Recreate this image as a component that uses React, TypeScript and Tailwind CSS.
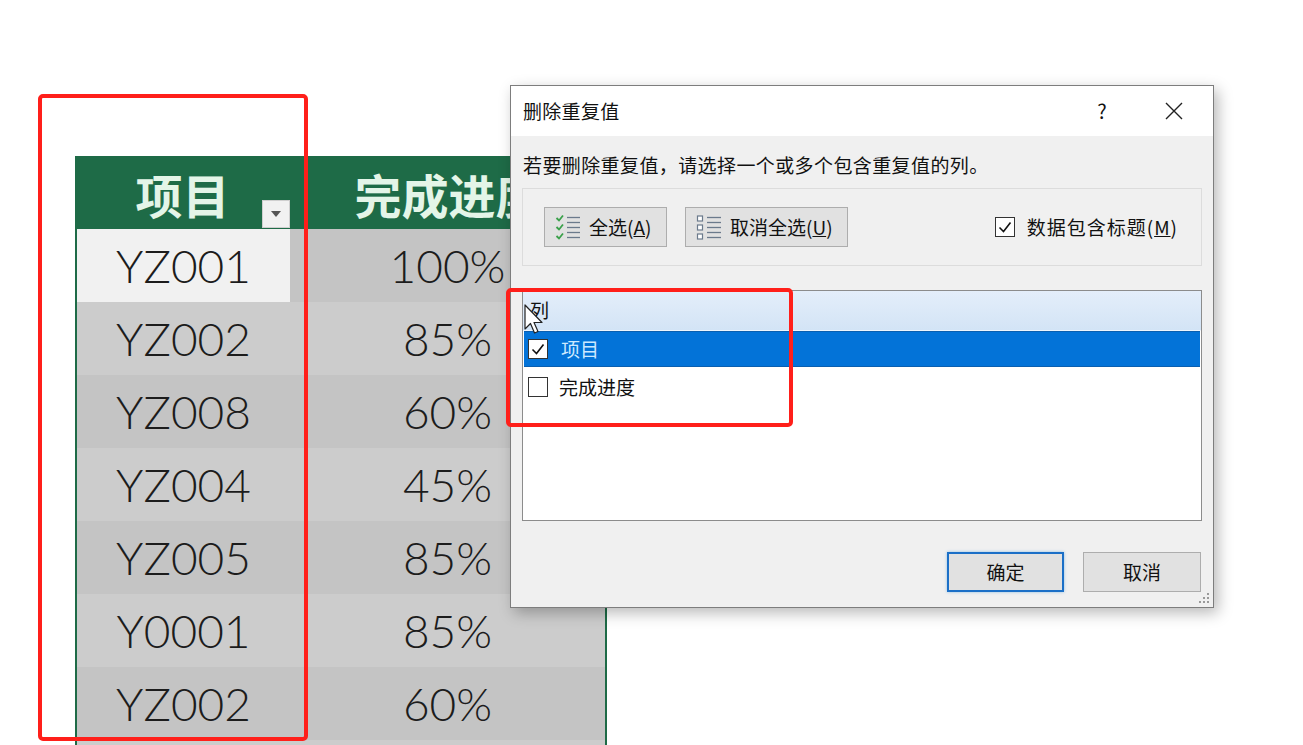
import React from "react";

const rows = [
  { id: "YZ001", pct: "100%" },
  { id: "YZ002", pct: "85%" },
  { id: "YZ008", pct: "60%" },
  { id: "YZ004", pct: "45%" },
  { id: "YZ005", pct: "85%" },
  { id: "Y0001", pct: "85%" },
  { id: "YZ002", pct: "60%" },
  { id: "", pct: "" },
];

const cjk = { fontFamily: '"Noto Sans CJK SC", "Noto Sans", sans-serif' };

function CheckBox({ checked }: { checked?: boolean }) {
  return (
    <span className="inline-flex w-[20px] h-[20px] shrink-0 items-center justify-center border-[1.5px] border-[#333] bg-white">
      {checked && (
        <svg width="16" height="16" viewBox="0 0 16 16">
          <path d="M2.5 8.5 L6.5 12.5 L13.5 3.5" stroke="#111" strokeWidth="1.6" fill="none" />
        </svg>
      )}
    </span>
  );
}

function SelectAllIcon() {
  return (
    <svg width="26" height="27" viewBox="0 0 26 27">
      {[4, 13, 22].map((y) => (
        <path key={y} d={`M1.5 ${y} l2.5 2.5 l4 -5`} stroke="#3aa04a" strokeWidth="1.8" fill="none" />
      ))}
      {[3, 8, 13, 18, 23].map((y) => (
        <path key={y} d={`M12 ${y + 0.5} h13`} stroke="#6b7a8c" strokeWidth="1.3" />
      ))}
    </svg>
  );
}

function UnselectAllIcon() {
  return (
    <svg width="26" height="27" viewBox="0 0 26 27">
      {[2, 11, 20].map((y) => (
        <rect key={y} x="1.5" y={y} width="5" height="5" stroke="#6b7a8c" strokeWidth="1.2" fill="white" />
      ))}
      {[3, 8, 13, 18, 23].map((y) => (
        <path key={y} d={`M11 ${y + 0.5} h14`} stroke="#6b7a8c" strokeWidth="1.3" />
      ))}
    </svg>
  );
}

function Sheet() {
  return (
    <div className="pt-[156px] pl-[75px]">
      <div className="w-[532px]">
        <div className="flex h-[73px] bg-[#1e6b47] text-[#e4f5e8] font-bold text-[47px]" style={cjk}>
          <div className="relative w-[215px] flex items-center justify-center pt-[4px]">
            项目
            <div className="absolute right-0 bottom-[1px] w-[28px] h-[28px] bg-[#f1f1f1] border border-[#cfcfcf] flex items-center justify-center">
              <svg width="10" height="6" viewBox="0 0 10 6">
                <path d="M0 0 H10 L5 6 Z" fill="#555" />
              </svg>
            </div>
          </div>
          <div className="flex-1 flex items-center justify-center pt-[4px] whitespace-nowrap">完成进度</div>
        </div>
        <div className="border-x-2 border-[#1e6b47] text-[46px] font-light text-[#1c1c1c]" style={{ fontFamily: "Lato, 'Open Sans', sans-serif" }}>
          {rows.map((r, i) => (
            <div key={i} className={`flex h-[73px] ${i % 2 === 0 ? "bg-[#c4c4c4]" : "bg-[#cccccc]"}`}>
              <div className={`w-[213px] flex items-center justify-center ${i === 0 ? "bg-[#f1f1f1]" : ""}`}>{r.id}</div>
              <div className="flex-1 flex items-center justify-center">{r.pct}</div>
            </div>
          ))}
        </div>
      </div>
    </div>
  );
}

function Dialog() {
  return (
    <div
      className="absolute left-[510px] top-[85px] w-[704px] h-[523px] border border-[#7d7d7d] bg-[#f0f0f0] flex flex-col shadow-[4px_5px_14px_rgba(0,0,0,0.28)] text-[19px] text-[#111]"
      style={cjk}
    >
      <div className="h-[50px] bg-white flex items-center pl-[12px] pr-[16px]">
        <span className="flex-1 tracking-[0.3px]">删除重复值</span>
        <span className="w-[46px] text-center text-[20px]">?</span>
        <span className="w-[46px] ml-[26px] flex justify-center">
          <svg width="18" height="18" viewBox="0 0 18 18">
            <path d="M1 1 L17 17 M17 1 L1 17" stroke="#222" strokeWidth="1.4" />
          </svg>
        </span>
      </div>
      <div className="flex-1 flex flex-col px-[11px]">
        <div className="h-[26px] leading-[26px] mt-[16px] pl-[1px] whitespace-nowrap tracking-[0.4px]">若要删除重复值，请选择一个或多个包含重复值的列。</div>
        <div className="mt-[10px] h-[78px] border border-[#dcdcdc] flex items-start pt-[18px] pl-[21px] pr-[23px]">
          <button className="h-[40px] w-[123px] bg-[#e1e1e1] border border-[#adadad] flex items-center pl-[10px] gap-[8px]">
            <SelectAllIcon />
            <span>
              全选(<span className="underline">A</span>)
            </span>
          </button>
          <button className="ml-[18px] h-[40px] w-[163px] bg-[#e1e1e1] border border-[#adadad] flex items-center pl-[10px] gap-[8px]">
            <UnselectAllIcon />
            <span>
              取消全选(<span className="underline">U</span>)
            </span>
          </button>
          <div className="ml-auto h-[40px] flex items-center gap-[12px]">
            <CheckBox checked />
            <span className="tracking-[1px]">
              数据包含标题(<span className="underline">M</span>)
            </span>
          </div>
        </div>
        <div className="mt-[24px] h-[231px] border border-[#8c8c8c] bg-white flex flex-col">
          <div className="h-[40px] flex items-center pl-[7px] bg-gradient-to-b from-[#e4eefa] to-[#d3e4f6] border-b border-[#eef5fd]">列</div>
          <div className="mx-[1px] h-[36px] flex items-center pl-[4px] gap-[13px] bg-[#0373d8] border-y border-[#0a5fb0] text-[#cde9ff]">
            <CheckBox checked />
            <span>项目</span>
          </div>
          <div className="mx-[1px] mt-[2px] h-[36px] flex items-center pl-[4px] gap-[11px]">
            <CheckBox />
            <span>完成进度</span>
          </div>
        </div>
        <div className="mt-[31px] flex justify-end gap-[19px] pr-[1px]">
          <button className="h-[40px] w-[117px] bg-[#e1e1e1] border-2 border-[#1b6fc7] shadow-[0_0_3px_rgba(0,120,215,0.4)]">确定</button>
          <button className="h-[40px] w-[118px] bg-[#e1e1e1] border border-[#adadad]">取消</button>
        </div>
      </div>
      <svg className="absolute right-[3px] bottom-[3px]" width="12" height="12" viewBox="0 0 12 12">
        {[
          [10, 2],
          [10, 6],
          [6, 6],
          [10, 10],
          [6, 10],
          [2, 10],
        ].map(([x, y], i) => (
          <rect key={i} x={x - 1} y={y - 1} width="2" height="2" fill="#9a9a9a" />
        ))}
      </svg>
    </div>
  );
}

export default function App() {
  return (
    <div className="relative w-[1303px] h-[745px] overflow-hidden bg-white">
      <Sheet />
      <Dialog />
      <div className="absolute left-[38px] top-[94px] w-[270px] h-[647px] border-4 border-[#ff1f1a] rounded-[5px]" />
      <div className="absolute left-[506px] top-[288px] w-[287px] h-[139px] border-4 border-[#ff1f1a] rounded-[5px]" />
      <svg className="absolute left-[524px] top-[304px]" width="20" height="32" viewBox="0 0 20 32">
        <path d="M1 1 L1 25 L6.5 19.5 L10.5 29 L14 27.5 L10 18.5 L18 18.5 Z" fill="white" stroke="#222" strokeWidth="1.2" strokeLinejoin="round" />
      </svg>
    </div>
  );
}
